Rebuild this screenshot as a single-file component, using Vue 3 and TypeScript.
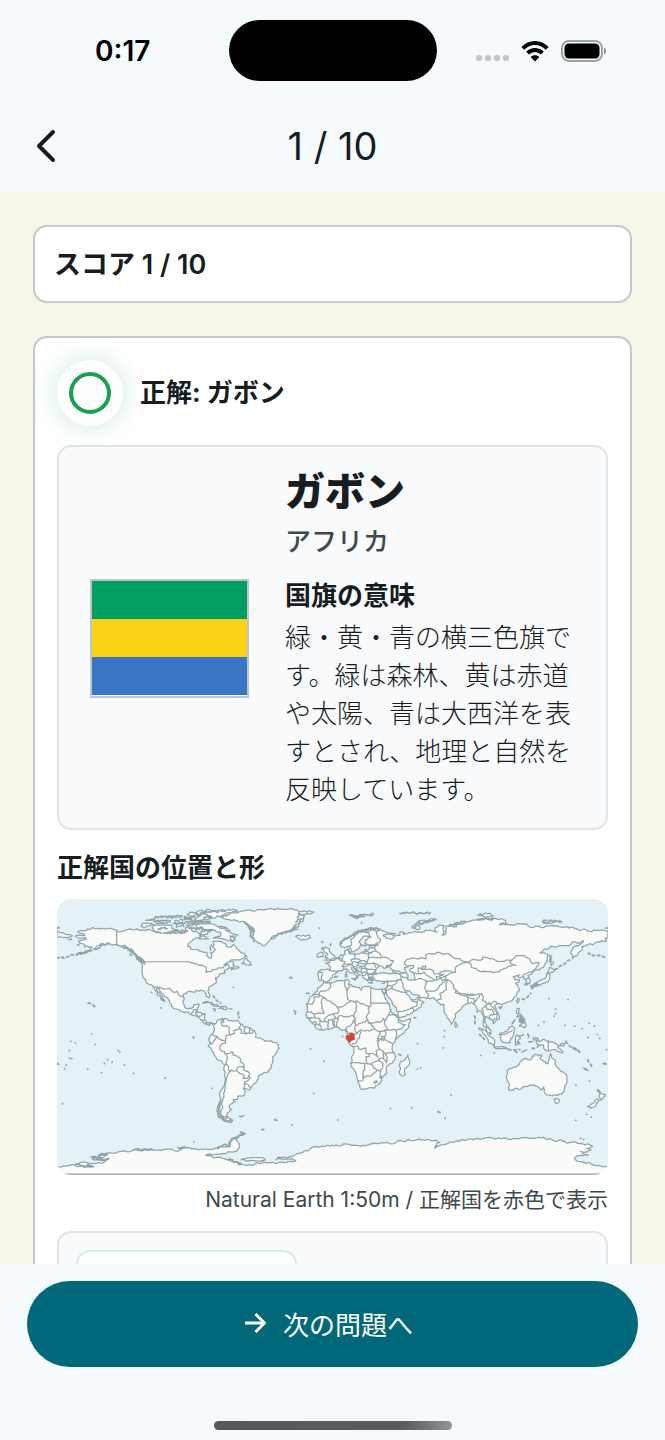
<script setup lang="ts">
import { ref } from 'vue'

interface FlagStripe {
  tone: string
}

const total = 10
const current = ref(1)
const score = ref(1)
const country = 'ガボン'
const region = 'アフリカ'
const meaning =
  '緑・黄・青の横三色旗です。緑は森林、黄は赤道や太陽、青は大西洋を表すとされ、地理と自然を反映しています。'
const stripes: FlagStripe[] = [{ tone: 'green' }, { tone: 'yellow' }, { tone: 'blue' }]

// All map geometry is "longitude,latitude" pairs in degrees.
const land: string[] = [
  // Americas
  '-168,65.6 -166,66.3 -162,66.1 -162,66.8 -164,67.5 -166.5,68.4 -163,69.3 -160,70.6 -156.5,71.3 -152,70.8 -148,70.4 -143,70.1 -141,69.6 -137,69 -134.5,69.6 -130,70 -128,70.5 -125,69.5 -121,69.8 -117,68.9 -115,68.3 -115,67.9 -110,68 -108,67.3 -108,68.2 -104,68 -101,67.8 -98,67.8 -96,68.2 -94.5,69 -96,70 -96,71.5 -94.5,72 -92,70.5 -92,69.5 -90.5,68.5 -89,69 -88,68 -86,67.5 -85.5,69.3 -82,69.6 -81.3,68.5 -82,67 -84,66.3 -87,66.5 -86,66 -87,64.5 -90,64 -91,63.5 -93,62 -94.5,60.5 -94.7,59 -93,58.7 -92.5,57 -90,57 -87,56 -85,55.3 -82.2,55.1 -82.3,53 -81,51.8 -79.3,51.3 -79,52 -79,54 -79.7,54.8 -77.5,55.6 -76.5,57 -78.5,58.8 -77.5,60 -78,62.3 -75,62.3 -72,61.6 -70,61 -69.5,59 -68,58.5 -66,58.7 -64.5,60.3 -63,58.5 -61.5,57 -60,55.2 -57.5,54.5 -56,52.5 -58.5,51.3 -60.5,50.2 -66,50.2 -69,48.5 -71,47 -68,48.8 -65,49.2 -64.5,48 -65.2,47 -64,46.2 -61.5,45.8 -61,45.3 -64,44.4 -66,43.6 -66,44.6 -64.5,45.5 -67,45 -69,44 -70.5,43.4 -70.8,42.3 -70,41.8 -72,41.2 -74,40.6 -74,39.6 -75.5,38.5 -76,37 -76.4,38.8 -76.2,37 -75.8,35.5 -77.5,34.3 -79,33.5 -81,31.8 -81.4,30 -80.2,27 -80.5,25.2 -81.8,26 -82.7,28 -84,30 -86,30.4 -89,30.3 -90,29.2 -92,29.6 -94.5,29.4 -97,28 -97.4,26 -97.8,22.5 -96.5,19.3 -94.5,18.2 -92,18.6 -90.8,19.5 -90.4,21 -87.2,21.5 -87.6,19.5 -88.3,18 -88.5,16 -86,15.9 -83.3,15 -83.6,12.5 -83.6,11 -82,9 -80,9.2 -77.5,8.6 -76.8,8 -75.5,10.5 -74.8,11.1 -72,12.2 -71.5,11 -71.6,9.2 -71,9.8 -71.3,11 -70,12 -68,10.7 -65,10.1 -62,10.7 -61,9.5 -60,8.4 -57.5,6.3 -54,5.9 -51.7,4.2 -50,1.8 -50.5,0 -48.5,-0.7 -44.5,-2.5 -41,-2.9 -38.5,-3.7 -35.3,-5.2 -34.8,-7.5 -36.5,-10.5 -39,-13 -39,-17 -40.5,-20.8 -42,-23 -44.5,-23.2 -48,-25.3 -48.6,-28 -50.5,-30.5 -53.5,-34 -55,-34.9 -58,-34.2 -57,-36 -57.5,-38 -62,-39 -62.3,-41 -65,-41 -63.7,-42.5 -65.3,-43.5 -67.5,-46 -65.8,-47.5 -69,-50.5 -68.4,-52.3 -70.8,-53.8 -74,-52 -75.5,-49 -74.5,-46 -72.8,-42 -73.6,-38 -71.6,-33 -70.4,-25 -70.3,-18.4 -76,-14 -79.7,-7.2 -81.3,-6 -80,-3.2 -81,-2 -80,0.5 -78.8,1.5 -77.2,4 -77.5,6.5 -77.9,7.3 -79.5,8.9 -80.4,8 -80.4,7.3 -82,8.1 -83.5,8.5 -85,10 -86,11.2 -87.5,12.9 -90,13.8 -92.2,14.5 -94,16.1 -96.5,15.7 -99,16.7 -102,18 -105.3,19.8 -105.5,21.5 -106.5,23.5 -109.2,26 -112,28.7 -113,31.2 -114.8,31.8 -114.5,30 -112.8,28 -111,25.5 -109.5,23.2 -110.3,23.2 -112.2,25 -112.2,26.3 -114.8,27.6 -114.2,28.5 -115.8,30.3 -117.1,32.5 -118.5,34 -120.6,34.6 -122,36.7 -123.8,39 -124.3,40.5 -124.4,43 -124,46 -124.7,48.3 -122.5,47.5 -122.8,49 -125,50.3 -127.5,51.5 -128.5,53.5 -130.5,54.8 -132,56.5 -134,58 -137,58.6 -140,59.8 -144,60 -147,61 -149,60 -151.5,59.3 -151,61 -154,59.3 -156,57.6 -159,56 -163,54.8 -161.5,56 -158,57.5 -157,58.8 -159,58.6 -162,58.7 -162,60 -165,61 -166,62.5 -163,63.2 -161,64 -161,64.6 -166,64.5',
  '-68.6,-52.7 -65.2,-54.7 -68.5,-55.5 -72,-54.2 -70,-53.5',
  // Greenland and the Canadian Arctic
  '-73,78.3 -68,79.8 -64,81 -60,82 -50,82.5 -43,83.2 -33,83.6 -25,83 -22,82 -12,81.5 -18,80 -19,78 -19,76 -22,73.5 -22,72 -26,70.5 -22.5,70.2 -27,68.5 -33,68 -37,66 -40,65 -42,62 -43.5,60 -48,61 -51,63.5 -53.5,66.5 -53.5,68.5 -51,69.8 -54.5,71 -55.5,73 -58.5,75.3 -66,76 -71,77',
  '-80,73.7 -76,72.7 -71,71 -68,70 -67,68.5 -62,66.7 -64,65 -67,66 -66,63 -65,62 -69,63 -72,64.3 -78,64.5 -73,66 -73,68 -79,70 -85,70 -89,71 -89.5,73 -85,73.7',
  '-117,70 -113,68.5 -105,69 -101,69.8 -105,71 -105,73 -110,73 -116,73 -118,71.5',
  '-125,72 -123,71.2 -119.5,72.5 -116,73.3 -121,74.5 -124.5,74',
  '-90,76.5 -82,76.3 -78,77.5 -75,79 -68,81 -62,82.5 -68,83.1 -80,83 -88,82 -92,81 -86,80 -88,78.3',
  '-92,76.5 -86,75.7 -80,75.5 -80,74.6 -92,74.8',
  '-95,80 -90,79 -88,80.3 -93,81.3',
  '-117,75.5 -112,74.5 -106,75 -106,76 -112,76 -117,76.3',
  '-122,76 -118,76.8 -116,77.5 -119,76',
  '-95,73.8 -90,73.8 -92,72.7 -95,72.5',
  '-102,73.5 -98,74 -97,72 -102,71.5',
  '-103,76 -98,76.6 -98,75 -103,75.2',
  '-87,64 -81,64 -84,65.8 -86,65.5',
  '-99,69.5 -96,69 -97,68.5',
  '-105,78.5 -98,78.8 -100,78',
  '-59.3,47.7 -55.5,46.8 -53,46.8 -53.5,48.6 -55.8,50 -55.8,51.5 -57.5,50.5',
  '-128,50.7 -125,49.5 -123.5,48.4 -125.5,49',
  // Caribbean
  '-84.8,22 -82,23 -79,22.5 -75,20.7 -74.3,20.1 -77.5,19.9 -78,20.8 -82,22.4',
  '-74.3,18.4 -71,17.8 -68.5,18.3 -70,19.8 -73,19.9',
  '-78.2,18.4 -76.3,18.1 -77.2,17.8',
  '-67.2,18.4 -65.7,18.3 -66.5,18',
  // Eurasia
  '25.8,71 31,70.3 33,69.3 41,67.3 40,66.3 34.5,66.7 33,66.4 35,64.3 37.5,64 40,64.7 40.5,66 44,66.3 44,68.5 47,67.8 46,66.9 50,68 53,68.6 56,68.4 60,68.5 61,69.7 65,69.2 68.5,68.3 67,69.5 67,71.2 69.5,72.9 72.8,72.8 72,71 73,68.5 71.5,66.3 74,67.5 74.5,70.5 74,72.3 78,72.3 81,72 80.5,73.6 87,75 90,75.4 93,76 99,76.3 104.3,77.7 108,76.7 113,75.8 113.5,74 109,73.5 114,73.6 119,73 124,73.8 127,73.5 129,71.5 132,71.8 136,71.5 140,72.4 145,72.3 150,71.5 155,71 159,70.8 161,69.5 166,69.6 170,69 171,70 176,69.7 180,69 180,65 178,64.3 179,62.5 174,61.8 170.3,60 166,60.2 163,59 162.5,56.2 160,53.2 156.7,51 155.6,55 157,58 163.5,61.5 164,62.6 160,61 156.5,61.6 154.5,59.5 149,59.5 142.5,59.2 135.5,54.8 139.5,54.2 141,53 140.5,50 138.5,46.5 135,43.5 132,43.2 130.7,42.3 127.5,39.8 129.3,37 129,35.2 126.5,34.5 126.7,37.5 125,38 125,39.5 121.5,38.9 122,40.5 118,39.2 119,37.3 122.3,37.2 119.5,35 121.5,32 122,30 120,26.5 117,23.6 113.5,22.2 110.5,21.2 109.8,21.4 108,21.6 106,19.5 107,17 109,13.5 109,11.5 106.7,10.4 105,8.7 105,10.3 102.8,11.8 101,12.8 100.5,13.5 99.8,12 99.3,9.4 100.5,7.2 103.3,4.5 103.5,1.5 101.3,2.8 100.4,5.8 98.3,8 98.6,10.5 97.7,15 97,17 94.5,16 94.3,18.5 92,21.5 91,22.7 89,21.8 87,21.5 85,19.6 82.3,16.6 80.2,15 80,12 79,10 77.6,8.1 76,11 74.5,14 73,18 72.8,21 70.8,20.9 69,22.3 68,23.7 66.5,25.3 61.6,25.2 57.3,25.7 56.5,27 52.5,27.5 50.5,30 48,30 48.5,28 50.2,26.5 51.2,24.6 54,24.1 56.3,26 56.8,24.2 59.8,22.5 57.7,19.5 55,17.2 52.2,15.6 45,12.8 43.4,12.7 42.8,16 39.1,21.5 35.2,28 34.9,29.4 34.3,27.8 32.6,30 32.3,31.2 34.3,31.4 36,34.5 36,36.8 32.5,36.1 30.5,36.6 28,36.8 26.5,38.5 26.3,40 29,41 33,42 36.5,41.3 41.5,41.5 39,44 37.5,45 38.5,47 35,46.3 36.5,45.3 33.7,44.5 32.7,45.8 30.8,46.5 28.7,44.8 27.8,42.5 28.8,41.2 26,40.8 24,40.8 22.9,40.3 24,37.9 22.8,36.5 21.3,37.8 19.4,40.3 19.4,41.8 15.2,44.2 13.6,45 13.8,45.6 12.3,45.2 12.5,44 14,42.5 16,41.8 18.4,40.2 17,40.5 16.5,38.5 15.7,38 15.8,40 12,41.8 10.3,43.5 8.8,44.4 6,43.1 3.2,43 3.2,41.9 0,40 -0.2,38.7 -2,36.8 -5.3,36.1 -6.4,36.9 -8.9,37 -9.3,38.7 -8.8,43.2 -1.8,43.4 -1.2,45.5 -4.5,48 -1.6,48.7 -1.8,49.7 1.5,50.2 4,51.8 5,53.3 8.5,53.8 8.2,56.5 10.5,57.6 10.3,56 11,54.2 14,54.2 18.5,54.7 21,55.3 21.2,57 24,57.2 24,59.2 28,59.6 30,60 23,60 21.3,61 21.5,63 25.3,65 22.3,65.8 17.3,62 18.5,60 16.5,57 14.3,55.5 12.8,55.6 11.2,59 8,58.1 5.5,58.8 5,61.8 10,64 13,66.5 16,68.6 20,70',
  '-180,69 -175,67.3 -170,66 -173,64.3 -178,65.5 -180,65',
  // Africa
  '-6,35.8 -2,35.1 5,36.8 10,37.3 11,35.5 10.2,34 15,32.4 19,30.3 20,32.5 23,32.7 29,30.9 32.3,31.2 32.5,29.9 34,26.5 35.5,24 37.2,21 37.5,18.5 39.5,15.5 43.2,12 43.3,11.5 44.5,10.4 51,11.8 50,8 47.5,4 43,-0.5 41,-2 39.3,-4.8 39,-7 40.5,-11 40.7,-15 36,-18.8 35,-21 35.5,-24 32.8,-26 32,-28.8 30,-31.3 27,-33.7 22,-34.1 18.5,-34.3 18,-32 16.5,-28.6 14.5,-22.5 11.8,-17.5 13.8,-11 12.3,-6 9,-1 9.5,1 9.8,3.5 8.5,4.7 6,4.3 4,6.3 1,6 -2,4.8 -4,5.2 -7.5,4.4 -11.5,7 -13.3,9 -15,11 -16.8,12.5 -17.4,14.7 -16.3,16.5 -16.2,19.5 -17,21 -14.8,26 -12,28 -9.8,29.8 -9.7,31.5 -6.8,34',
  '49.3,-12 50.4,-15.5 47.5,-24.8 45,-25.5 43.5,-23 44.3,-20 44,-17 47,-15.5',
  // European islands
  '-5.5,50.1 1.3,51.2 1.7,52.7 0,53.5 -1.5,55 -2,57.6 -5,58.6 -6,57 -5,55 -3,54 -4.5,53.2 -5,51.8 -3,51.4',
  '-10,52 -6.4,52.2 -6,54 -7.5,55.3 -10,54',
  '-22,64 -18.5,63.5 -14.5,64.5 -15,66.2 -20,66 -22,66.3 -24,65.6',
  '8.4,39 9.6,39.2 9.4,41 8.4,40.8',
  '9,41.5 9.4,43',
  '12.5,38 15.5,38.2 15,36.8',
  '23.6,35.4 26.2,35.1',
  '32.4,34.8 34.4,35.6 33.5,34.9',
  // Arctic Eurasia
  '11,79.5 16,77 21,78.5 18,80',
  '20,80 27,80.2 22,79.4',
  '52,71 57,70.6 56,73 60,75 68,76.8 60,76.2 55,74.5 52,72',
  '95,79.5 100,81 105,79 100,78',
  '137,75.5 145,75.8 150,75 140,74',
  // East and South-East Asia
  '142,53.5 143.3,52 143,49 144.5,49 142.8,46.5 142,49',
  '140,41.5 141.7,45.4 145.3,43.5 143,42',
  '141.5,41.4 142,39.5 140.8,35.8 137,34.7 135.7,33.6 131,34.2 133,35.5 136.5,37 139,38 140,40.5',
  '130,33.5 131.9,33 131,31.3 130,32',
  '132.5,33.8 134.5,34.2 133.5,32.9',
  '121,25 121.8,25 120.8,22 120.1,23.2',
  '108.7,19.3 110.8,20 109.6,18.3',
  '79.8,8 80.2,9.7 81.8,7.5 80.5,6',
  '120.3,16 120.7,18.5 122.2,18.4 121.6,15.5 124,13 121,13.6',
  '122,11.8 123.2,11 122.5,10.5 125,12.4 125.3,11 124,10 122.5,9.3',
  '122,7 123.5,8.5 126,9.5 126.4,7 125.3,5.8 124,7',
  '117.3,8.3 119.4,11.2',
  '109,1.5 111,2.5 115,5 117,7 119,5 118,1 116,-3.8 110.3,-2.8',
  '95.3,5.6 97.5,5.2 103,0 106,-3 105.7,-5.8 102,-3.8 98.5,1.8',
  '105.3,-6.6 108.5,-6.6 112.5,-6.7 114.5,-8 108,-7.7',
  '119.5,-5.5 119.5,-0.5 120.5,1.2 125,1.5 121,0.5 123,-0.8 121.5,-2 122.5,-5 121,-3 120.3,-5.5',
  '123.6,-10.3 127,-8.5 125,-9.4',
  '127.5,2 128.5,1 127.8,-0.8',
  '128,-3.2 130.7,-3.2 129,-3.6',
  // Oceania
  '131,-0.8 134,-0.8 135,-3.3 138,-1.7 144.5,-3.8 147.8,-6.2 147,-6.8 150.5,-10.5 147,-9.5 143.5,-8.5 141,-9.1 138.5,-8.2 138,-5.5 133,-4 134,-2.5 131.5,-2',
  '148.5,-5.6 152,-4.3 151,-6',
  '164.1,-20.2 167,-22.2 165,-21.5',
  '177.3,-17.8 178.6,-18',
  '173,-34.5 175.5,-37 178.3,-37.8 177,-39.5 175.2,-41.5 175,-40 174,-39.3 174.8,-37.5',
  '172.7,-40.6 174.2,-41.8 170.7,-45.9 168.5,-46.6 166.6,-45.8 171,-42.5',
  '144.8,-40.8 148.2,-40.9 147.5,-43.3 146,-43.4',
  '114,-22 113.5,-26 115.7,-32 115,-34.3 118,-35 123.5,-34 126,-32.3 129,-31.6 131.5,-31.4 134.5,-33 136,-34.8 137.8,-32.7 138.2,-35.5 140,-38 143.5,-38.8 147,-38.3 150,-37.3 151.5,-33 153.2,-30 153.2,-26 150.8,-23.3 146.3,-19 145.3,-15 143.5,-14 142.5,-10.8 141.6,-14 140.8,-17.5 139.5,-17.5 135.8,-15 136.8,-12.2 132.5,-11.4 130.5,-12.7 129.5,-15 126,-14 122.3,-17.2 121.8,-18.5 117,-20.7',
  // South Atlantic
  '-61,-51.8 -58,-51.5 -59,-52.2',
  '-38,-54 -36,-54.7',
  // Antarctica
  '-180,-84.2 -168,-84 -160,-85 -156,-85 -168,-83.2 -152,-82.5 -148,-81 -156,-80.5 -146,-79.5 -158,-78.3 -147,-77 -153,-77.2 -145,-75.8 -136,-74.6 -128,-74 -115,-74.1 -102,-74.7 -97,-72.5 -90,-73.3 -80,-73.4 -74,-72 -67,-72 -67,-69 -65,-66 -60.5,-64 -57,-63.3 -61,-65 -63,-67 -61,-70 -61.5,-73 -64,-75 -72,-76.5 -83,-77.5 -76,-79 -70,-80 -60,-82.5 -60.6,-83.6 -50,-82.6 -41,-82.2 -24,-81.3 -37,-80.4 -36,-79 -27,-78.5 -21,-76 -15,-73.5 -10.6,-71.6 0,-71 10,-70.4 20,-70.8 30,-69.8 38,-70 42,-68.5 50,-67.2 57,-66.6 68,-67.8 70,-69 67,-72.8 73,-70.5 80,-68.3 89,-66.8 100,-66 112,-66.1 115,-67 122,-66.6 132,-66.2 143,-67 152,-68.5 160,-69.5 165,-70.7 170,-71.6 166,-73 169,-74 162,-75 167,-77.5 160,-77.8 158,-79.5 161,-81.5 170,-83.5 180,-84.2 180,-89.7 -180,-89.7',
  '-60,-80.5 -54,-79 -46,-79 -44,-80.3 -52,-80.8',
]

const borders: string[] = [
  // North and Central America
  '-141,69.6 -141,60.3 -138,59 -135.5,59.7 -133,57.5 -130,56 -130,55',
  '-122.8,49 -95,49 -92,48.3 -89.5,48 -84.8,46.7 -82.5,45.3 -82.5,42 -79,42.8 -79,43.5 -76.5,44 -74.7,45 -71.5,45 -70.2,46.2 -69,47.4 -67.8,47 -67.3,45',
  '-117.1,32.5 -114.8,32.6 -111,31.3 -108.2,31.3 -106.5,31.8 -104.5,29.6 -103,29 -101.5,29.8 -99.3,26.5 -97.3,25.9',
  '-92.2,14.5 -91.5,16 -91,17.8 -89.1,17.8 -88.3,18',
  '-89.1,17.8 -89.2,15.9 -88.5,15.8',
  '-89.2,15.9 -89.3,14.4 -87.7,13.2 -85,14.5 -83.3,15',
  '-85.7,11.1 -83.7,10.9',
  '-82.9,8.2 -82.6,9.5',
  '-71.7,18 -71.7,19.7',
  // South America
  '-71.5,11.8 -72.8,9 -72,7.2 -67.5,6.2 -67.3,2.5 -66.8,1.2 -69.5,0.8 -69.5,-1 -70,-4.2',
  '-78.8,1.4 -77,0.4 -75.3,0 -72.5,-2.3 -70,-2.7 -70,-4.2 -72.9,-5.2 -73.8,-7.3 -72.5,-9.5 -70.6,-9.5 -70.6,-11 -69.5,-11',
  '-80.3,-3.4 -79,-5 -77.8,-3 -75.3,0',
  '-69.5,-11 -68.7,-12.5 -69,-15.5 -69.5,-17.5 -70.3,-18.4',
  '-69.5,-11 -65.4,-9.8 -65,-12 -60.5,-13.8 -60.2,-16.2 -58.3,-17.3 -57.7,-20 -59,-19.3 -62,-20 -62.7,-22.2 -66.2,-21.8 -67.2,-22.8 -68,-21 -69.5,-17.5',
  '-67.2,-22.8 -68.5,-25 -69.8,-30 -70,-33.5 -71.2,-37 -71.8,-42 -71.7,-46 -73,-49 -72.3,-52 -68.5,-52.3',
  '-57.7,-20 -57.9,-22 -55.5,-22.5 -54.3,-24 -54.6,-25.6 -56,-27.3 -58.6,-27.2 -57.6,-25.3 -62.7,-22.2',
  '-54.6,-25.6 -53.8,-27 -57.6,-30.2 -58.3,-34',
  '-57.6,-30.2 -55,-31.2 -53.4,-33.7',
  '-60,8.3 -61.2,6 -60,5 -59.8,2.3 -56.5,1.9 -54.5,2.4 -52.5,2.2 -51.7,4.2',
  '-57.2,6 -58,4 -56.5,1.9',
  '-54,5.8 -54.5,2.4',
  '-66.8,1.2 -64,2 -64.5,4 -60.7,5.2',
  // North and West Africa
  '-2,35.1 -1.2,32.3 -5,30 -8.7,28.7 -8.7,27.3 -4.8,25 1.2,21.1 3.2,19 6,19.5 12,23.5 10,24.5 9.5,26.5 9.5,30.2 8,33 8.3,36.9',
  '-13,27.7 -8.7,27.7 -8.7,26 -12,26 -12,23.4 -13,21.3 -17,21.3',
  '-4.8,25 -6.5,25 -5.5,15.5 -10,15.4 -12,14.8 -14,16.5 -16.4,16.2',
  '9.5,30.2 11.5,33',
  '12,23.5 14.2,22.6 16,23.4 24,19.5 24,20 25,20 25,22 25,31.6',
  '25,22 36.8,22',
  '24,19.5 23.9,15.7 22,13 23,11',
  '15,23 15.5,21 15.5,17 13.5,13.7',
  '3.2,19 4.2,16.5 3.5,15.3 0.2,15 2.3,12 3.6,11.7 4,13.5 8,13 13.5,13.7 14.6,12.5 13.5,10 11.5,7 9,6 8.5,4.7',
  '3.6,11.7 2.7,9 2.7,6.3',
  '0.2,15 -2.5,14 -5.3,11.5 -5,10 -2.7,9.6 -2.8,11 0,11 2.3,12',
  '-2.7,9.6 -3,5.1',
  '0,11 1.2,6.1',
  '0.9,11 1.6,6.3',
  '-12,14.8 -11.4,12.4 -8.5,12 -8,10.2 -5,10',
  '-8,10.2 -8.3,7.6 -7.5,4.4',
  '-13.3,9 -11,10 -10.5,8.5 -8.3,7.6',
  '-10.5,8.5 -11.5,7',
  '-11.4,12.4 -16.7,12.4',
  '-13.7,12.6 -15,11',
  // Central and East Africa
  '14.6,12.5 15,10 14,9.9 15.5,7.5 14.5,5 16,2.2 9.8,2.3',
  '15.5,7.5 19,9 23,11 24,8.7 27.4,5.2',
  '16,2.2 18.5,4.5 22.5,4.2 27.4,5.2 30.8,3.5',
  '18.5,3.5 17.8,-0.5 16,-2.5 15,-4.5 12.8,-4.7',
  '23.5,9 28,9.5 32,10 33,12.2 34.3,10.5 34,8.5 36,4.5 30.8,3.5 31.2,2 29.6,-1.3 34,-1 35,1.8 34,4.2',
  '34.3,10.5 36.5,14.3 38.5,17.5',
  '36.5,14.3 40,14.5 42.5,12.5',
  '43,11 43,9.5 47.8,8 45,5 42,4.2 36,4.5',
  '42,4.2 41,-1.7',
  '34,-1 37.7,-3.5 39.3,-4.7',
  '29.6,-1.3 30.5,-2.5 29.4,-4.5 30.8,-8.3 33,-9.5 34.6,-11.5 40.4,-10.5',
  '29,-2.8 30.5,-2.4',
  // Southern Africa
  '12.3,-6 16.5,-5.9 17,-8 21.8,-7.3 22,-11 24,-11 24,-13 21.9,-13 22,-16.2 23.4,-17.6',
  '24,-11 28.5,-12 29.7,-13.4 28.6,-9.3 30.8,-8.3',
  '11.8,-17.3 18.5,-17.4 23.4,-17.6 25.2,-17.8 29.3,-22 25.5,-25.5 20.7,-26.8 20,-25',
  '21,-18 21,-22 20,-22 20,-28.4 16.5,-28.6',
  '25.2,-17.8 28.9,-15.9 30.4,-15.6 33,-17 32.7,-20 31.3,-22.4 29.3,-22',
  '31.3,-22.4 32,-26.8',
  '30.4,-15.6 30.2,-14.5 33.2,-14',
  '33,-9.5 33.2,-14 35,-17 35.8,-15.5 34.6,-11.5',
  '27,-29.7 28.5,-28.7 29.4,-29.5 28,-30.6 27,-29.7',
  '31,-26 32,-26.3 31.8,-27.3 31,-27 31,-26',
  // Europe
  '-8.8,41.9 -6.5,41.8 -7.3,38.5 -7.3,37.2',
  '-1.8,43.4 3.2,42.4',
  '2.5,51.1 6,49.5 8.2,49 7.6,47.6 6,46.3 7,45.9 7.5,43.8',
  '3.4,51.4 6,51 6,49.5',
  '6,51 7,53.3',
  '7.6,47.6 9.6,47.5 13,47.5 13,48.8 12.2,50.3 14.8,51 14.3,53.9',
  '7,45.9 10.4,46.8 13.7,46.5',
  '13,48.8 17,48.7 18.8,49.5 14.8,51',
  '18.8,49.5 22.5,49.1 23.6,51.5 23.5,54 19.8,54.4',
  '17,48.7 16.2,46.9 18.8,45.9 21,46.2 22.8,48 22.5,49.1',
  '17,48 22.2,48.4',
  '22.8,48 26.6,48.2 28.2,45.5',
  '21,46.2 22.7,44.2 28.5,43.8',
  '13.7,45.5 16.2,46.9',
  '15.7,45 19,45 18.5,42.5',
  '19,45 22.7,44.2 22.4,42.3 19.4,41.8',
  '22.4,42.3 23,41.3 26.3,41.7 28,42',
  '23,41.3 20.2,40',
  '23.5,54 26.5,55.7 28.2,56.2 31,54.7 31.5,53.2 32,52 34,52 38,49.8 40,49.5 38.2,47.2',
  '23.6,51.5 31.5,51.3 32,52',
  '21,56 26.5,55.7',
  '24.4,57.9 27.5,57.6',
  '28.2,56.2 27.5,57.6 28,59.4',
  '26.6,48.2 30,46.5',
  '28,60.5 31.5,62.8 29.5,65 29,69 31,69.7',
  '24.1,65.8 23.6,67.8 20.5,69.1 26,69.9 29,69',
  '11.2,59 12.5,61 12,63.5 14.5,66 18,68.5 20.5,69.1',
  // Central Asia and Mongolia
  '49,46.3 47,48 48,50 52,51.5 55,51 61,50.8 61,53.5 68,55 71.5,54.2 77,53.3 80,51 83,51 87.3,49.1',
  '53,42 56,41.3 56,45 61.5,44 66,43 66,41.5 69,41.3 71,42.5 76,43 80.3,42.2 80.3,45 83,47.2 85.5,48 87.3,49.1',
  '87.3,49.1 92,50.7 98,50.5 98,52 102,51.3 107,49.7 114,50.2 116.5,49.9 116,48 119.8,46.8 112,44.5 105,41.7 96,42.7 91,45.1 90.5,47.5 87.3,49.1',
  '116.5,49.9 120,53 125.5,53 131,47.8 135,48.4 133,45 131,43',
  '130.7,42.3 128,42 124.4,40',
  '126.7,37.8 128.4,38.6',
  '56,41.3 60,42.2 62,39.8 66.5,37.4',
  '68,37 68,39.5 73.8,39.4',
  '69,41.3 73,40.8 70,40',
  // South and South-East Asia
  '80.3,42.2 74,40 73.8,38.5 75,37 78,35.3 79,32.5 81,30.3 86,28 89,27.5 92,27.7 97,28.2 98.7,25.5 97.6,24 101.2,21.3 105.3,23.2 108,21.6',
  '75,37 74,34.5 74.5,31 70,28 71,24.5 68.2,23.7',
  '81,30.3 80.1,28.8 88.1,26.5 88,27.9',
  '89,27 92,27',
  '88.9,21.9 88.1,25.8 92.2,25 92.3,22 94,24 97,28.2',
  '101.2,21.3 100,20.3 97.7,18.3 98.5,15 99.5,11.5 98.7,10.2',
  '100,20.3 101,17.7 104.5,17.5 105.5,14.4 102.5,13.7 102.8,11.8',
  '102.2,22.4 104,20 107.5,15 107.5,12.3 104.5,10.4',
  '105.5,14.4 107.5,14.6',
  '100.2,6.5 102,6.2',
  '109.7,1.8 112,1.3 115,3 117.5,4.2',
  '141,-2.6 141,-9.1',
  // Middle East and Caucasus
  '61.6,25.2 63,27.2 60.9,29.8 61,34.5 61.2,36.6 57,38.2 53.9,37.3',
  '60.9,29.8 66.3,29.8 69.3,31.9 71.3,34.5 74.8,37.2 71.5,36.7 71,38.4 68,37 64.5,36.3 61.2,36.6',
  '48,30 46,33 45.4,36 44.8,37.2 44.8,39.7 48,38.8 48.9,38.4',
  '36,36 42.4,37.1 44.8,37.2',
  '42.4,37.1 41,34.4 38.8,33.4 35.8,32.8',
  '35,29.4 37.5,31 39,32 44.7,29.2 47.5,29 48.4,28.5',
  '38.8,33.4 39,32',
  '42.8,16.4 47,17 52,19 55,20 55.5,22.5 51.6,24',
  '52,19 53.1,16.6',
  '56,24.5 55.5,22.5',
  '41.5,41.5 43.5,41.1 46.5,41.8 48.5,41.8',
  '40,43.4 44,42.6 46.5,41.8',
  '43.5,41.1 44.8,39.7',
  '34.2,31.3 34.9,29.4',
  '35.6,33.2 35,29.5',
]

// Broken coasts, drawn as an extra ragged line.
const fjords: string[] = [
  '-123,48.5 -125.5,50.5 -128,52 -130,54.5 -132.5,56 -134.5,58 -137,58.8',
  '-124,49.5 -127,51.5 -129,53.5 -131,55.5 -133.5,57.5',
  '-131.5,53 -132.5,54',
  '-146,60.5 -149,60 -153,58 -155,57',
  '-158,56.2 -163,54.8 -167,53.5',
  '-112,25 -109.8,23.4',
  '-73.5,-42 -74.8,-46 -75,-49 -74.5,-51.5 -72,-54 -68.5,-55.3 -65.5,-54.8',
  '-73.6,-44 -74.2,-47 -74.2,-50 -72.5,-52.5 -70,-54.5',
  '-51.5,62 -51.5,64 -53.3,67 -52,70 -55,72.5 -58,75',
  '-52,66 -51,69 -53,71.5 -56,74',
  '-23,73.5 -25,72.2 -26,71 -24.5,70.3 -30,68.3 -36,66.3 -40,64.5',
  '-22,74.5 -20,77 -19,80 -22,81.5',
  '-24,75 -22,77.5 -21.5,80',
  '5.2,60 6,62.3 10.5,64.5 13,66.5 16,68.5 21,70 26,70.8 30,70.4',
  '10.8,56 12,55.2',
  '19,60.2 22,60.1',
  '23.5,38.5 25,37.2 26.8,37 25.8,39 24,36.8',
  '14.5,44.5 16.5,43.2',
  '124,10.8 123,12 125,11.5 125.2,10 123.2,9.8 122,11 124.5,12.2 124,9.5',
  '120.5,13 123,12.8 122,11.5',
  '126,34.4 128.5,34.8',
  '129.5,33.3 131,32.6 134,34.2',
  '-97,76.8 -92,77.5 -97,78 -90,77.9',
  '-104,74 -96,75 -91,74.2 -84,74.8',
  '-115,74.2 -108,74.2',
  '-116,77.6 -110,78.3 -104,77.8',
  '-88,79 -83,80 -79,78.5 -84,77.2',
  '-86,81 -78,81.8 -70,82',
  '-94,71 -88,70.5 -82,69.8 -78,70',
  '-108,68 -103,68.3 -98,68.2',
  '-114,70.3 -108,70.5',
  '-74,71.8 -70,70.3 -67,69',
  '-65,66 -64,64 -66,62.5',
  '-79,60 -79.5,56.5',
  '-66,-68 -68,-71 -75,-72',
  '-57.5,-63.5 -62,-65 -65.5,-67.5',
  '-101,-72.4 -96,-72.3',
  '-130,-73.8 -118,-73.9',
  '-165,-84.6 -157,-84.7',
  '-152,-77 -147,-76.5 -157,-79.8',
  '-68,-80.5 -62,-82 -60,-83',
  '44,80.5 50,80.7 58,80.8 64,81',
  '13,79.2 17,78 20,79.5',
  '53,71.5 55,73 60,75.3 67,76.6',
  '76,72.5 80,73 87,75',
  '95,76.2 101,77.2 105,77.6',
  '160,-9 157,-7.3',
]

const islands: string[] = [
  '-163,54.6 -168,53.2 -173,52.2 -178,51.7',
  '-178.5,71.2 -180,71.3',
  '-180,51.5 -176,51.9',
  '-172,63.5 -169,63.3',
  '-166.5,60 -165.8,60',
  '-159.6,22 -157.9,21.4 -156.5,20.8 -155,19.4 -155.8,20',
  '-78,26.7 -77,25.5 -75.5,23.5 -73,22',
  '-61.5,16 -61,14 -61.2,12.5',
  '-91,0 -90.5,-0.8',
  '-17,28.3 -14,28.3',
  '-25,17 -23.5,15 -24.5,15',
  '-28,38.6 -25.5,37.8',
  '-7,62.1 -6.5,61.6',
  '-1.2,60.5 -1.5,59.9',
  '-7,57.3 -6.5,58.2',
  '1.5,39 4,40',
  '145.5,44 148,45.2 151,46.8 155,50',
  '124,24.5 127.5,26 129.5,28.4',
  '92.8,13.5 92.9,11 93.8,7',
  '96,1.5 98,0.5 99,-1.5 100.5,-3',
  '115,-8.3 116.5,-8.6 119,-8.6 122.5,-8.5',
  '119.5,-9.6 120.5,-10.2',
  '130.5,-7.5 134.5,-6',
  '152.5,-3 153.8,-4.5',
  '154.7,-5.8 156.5,-7.2 159,-8.5 161.5,-10.3',
  '166.8,-15 167.5,-16.5 168.5,-18 169.3,-19.5',
  '177,-17.5 180,-16.5',
  '-180,-17 -178.8,-18',
  '68.8,-49 70.3,-49.5',
  '138,76 145,76 149,75.3',
  '178.5,71 180,71',
  '167,54.6 172,53 178,51.8',
  '-46,-60.6 -45,-60.7',
  '-60,-62.5 -57,-61.9',
  '53.4,12.5 54.3,12.5',
  '43.3,-11.5 45,-12.8',
]

const dots: [number, number][] = [
  [-149, -17.5], [-147, -15], [-144, -16.5], [-140, -9], [-139, -10], [-136, -18.5], [-151, -23.4],
  [-130, -24], [-109.4, -27.1], [-78.9, -33.7], [-171.8, -14], [-170.5, -14.3], [-175, -21], [-174, -18.6],
  [-176.4, -43.8], [-160, -21.2], [-172, -9], [-168, -4], [-157.4, 1.9], [-155, -5], [-171, -3],
  [-64.8, 32.3], [-14.4, -8], [-5.7, -16], [-12.3, -37.2], [-26.5, -57.5], [3.4, -54.4], [6.6, 0.3],
  [8.7, 3.4], [37.8, -46.9], [51.7, -46.4], [57.6, -20.3], [55.5, -21.1], [55.5, -4.6], [73.2, 4],
  [73, 0], [72.4, -7.3], [105.6, -10.5], [96.8, -12.2], [77.5, -38], [73.5, -53.1], [144.8, 13.5],
  [145.7, 15.2], [145.8, 18], [134.5, 7.4], [138.1, 9.5], [151.8, 7.4], [158.2, 6.9], [163, 5.3],
  [167.7, 8.7], [171, 7], [173, 1.4], [174.5, -1], [166.9, -0.5], [179, -8.5], [167.9, -29], [159, -31.5],
  [158.9, -54.6], [166, -50.7], [169, -52.5], [141.3, 25], [153.9, 24.3], [-8.7, 71], [19, 74.5],
  [-112, 18.8], [-118.3, 29], [-77, 17], [164, -67], [162, -66.5], [-90.5, -68.8], [126, 34],
]

const gabon =
  '9.5,1.1 11.3,1 11.3,2.4 13.3,2.3 14.3,1.3 14,-0.2 14.5,-1.8 12.6,-2.3 11.8,-3 11.1,-4 9,-1.2 8.8,-0.4'

const lakes: string[] = [
  '47,45 50,46.6 53,46.7 53,45 51,44.5 50.5,43 53,41.5 53.7,39 53.9,37 51,36.8 49,37.6 49.3,40.3 47.5,43',
  '32,0.3 34,0 33.5,-2.5 31.8,-2',
  '58.5,45.8 61,46.4 60,44 58.5,44',
]

type Point = [number, number]

function noise(a: Point, b: Point): number {
  const v = Math.sin((a[0] + b[0]) * 12.9898 + (a[1] + b[1]) * 78.233) * 43758.5453
  return (v - Math.floor(v)) * 2 - 1
}

// Midpoint displacement, capped in degrees; segments along a meridian or parallel stay straight.
function split(a: Point, b: Point, amount: number, out: Point[]): void {
  const dx = b[0] - a[0]
  const dy = b[1] - a[1]
  const length = Math.hypot(dx, dy)
  if (length < 1.2 || dx === 0 || dy === 0) {
    out.push(b)
    return
  }
  const k = noise(a, b) * Math.min(amount, 0.9 / length)
  const mid: Point = [(a[0] + b[0]) / 2 - dy * k, (a[1] + b[1]) / 2 + dx * k]
  split(a, mid, amount, out)
  split(mid, b, amount, out)
}

function rough(source: string, amount: number, closed = false): string {
  const pts = source.split(' ').map((p) => p.split(',').map(Number) as Point)
  const out: Point[] = [pts[0]]
  for (let i = 1; i < pts.length; i++) split(pts[i - 1], pts[i], amount, out)
  if (closed) split(pts[pts.length - 1], pts[0], amount, out)
  return out.map(([x, y]) => `${x.toFixed(2)},${y.toFixed(2)}`).join(' ')
}

const landShapes = land.map((p) => rough(p, 0.2, true))
const lakeShapes = lakes.map((p) => rough(p, 0.15, true))
const borderLines = borders.map((p) => rough(p, 0.16))
const fjordLines = fjords.map((p) => rough(p, 0.6))
const islandLines = islands.map((p) => rough(p, 0.2))
const dotPath = dots.map(([lon, lat]) => `M${lon} ${lat}h.1`).join('')

function next(): void {
  current.value = current.value < total ? current.value + 1 : 1
}

function back(): void {
  current.value = Math.max(1, current.value - 1)
}
</script>

<template>
  <div class="screen">
    <header class="top">
      <div class="status">
        <time class="clock">0:17</time>
        <span class="island"></span>
        <div class="signals">
          <span class="cell"><i></i><i></i><i></i><i></i></span>
          <svg class="wifi" viewBox="0 0 28 22" aria-hidden="true">
            <path d="M1.800 8.400C8.600 1.200 19.400 1.200 26.200 8.400" />
            <path d="M6.600 13.100C10.900 8.900 17.100 8.900 21.400 13.100" />
            <path class="solid" d="M14 21.600L9.600 17.100C12.200 14.700 15.800 14.700 18.400 17.100Z" />
          </svg>
          <svg class="battery" viewBox="0 0 46 22" aria-hidden="true">
            <rect class="shell" x="1" y="1" width="40" height="20" rx="7" />
            <rect class="charge" x="3.500" y="3.500" width="35" height="15" rx="4.500" />
            <path class="cap" d="M43 7.500C45.800 8.500 45.800 13.500 43 14.500Z" />
          </svg>
        </div>
      </div>
      <div class="bar">
        <button class="back" type="button" aria-label="戻る" @click="back">
          <svg viewBox="0 0 20 34" aria-hidden="true"><path d="M17 3L3 17L17 31" /></svg>
        </button>
        <h1 class="progress">{{ current }} / {{ total }}</h1>
      </div>
    </header>

    <main class="content">
      <section class="card score">スコア {{ score }} / {{ total }}</section>

      <section class="card result">
        <div class="verdict">
          <span class="badge"><span class="ring"></span></span>
          <h2 class="label">正解: {{ country }}</h2>
        </div>

        <article class="panel info">
          <div class="flag">
            <span v-for="s in stripes" :key="s.tone" class="stripe" :class="s.tone"></span>
          </div>
          <div class="facts">
            <h3 class="name">{{ country }}</h3>
            <p class="region">{{ region }}</p>
            <h4 class="label">国旗の意味</h4>
            <p class="meaning">{{ meaning }}</p>
          </div>
        </article>

        <h3 class="label map-title">正解国の位置と形</h3>
        <figure class="figure">
          <svg class="map" viewBox="-180 -90 360 180" role="img" aria-label="世界地図">
            <g transform="scale(1 -1)">
              <polygon v-for="(p, i) in landShapes" :key="'l' + i" class="land" :points="p" />
              <polygon v-for="(p, i) in lakeShapes" :key="'w' + i" class="lake" :points="p" />
              <polyline v-for="(p, i) in borderLines" :key="'b' + i" class="line" :points="p" />
              <polyline v-for="(p, i) in fjordLines" :key="'f' + i" class="line fjord" :points="p" />
              <polyline v-for="(p, i) in islandLines" :key="'i' + i" class="line chain" :points="p" />
              <path class="line dots" :d="dotPath" />
              <polygon class="answer" :points="gabon" />
            </g>
          </svg>
          <figcaption class="caption">Natural Earth 1:50m / 正解国を赤色で表示</figcaption>
        </figure>

        <div class="panel more"><div class="chip"></div></div>
      </section>
    </main>

    <footer class="bottom">
      <button class="next" type="button" @click="next">
        <svg viewBox="0 0 22 22" aria-hidden="true"><path d="M1 11H20M11.500 2L20.500 11L11.500 20" /></svg>
        <span>次の問題へ</span>
      </button>
      <span class="home"></span>
    </footer>
  </div>
</template>

<style>
body {
  margin: 0;
}
</style>

<style scoped>
* {
  box-sizing: border-box;
}

h1,
h2,
h3,
h4,
p,
figure {
  margin: 0;
}

.screen {
  display: flex;
  flex-direction: column;
  height: 100vh;
  background: #f7f4e8;
  color: #171c1e;
  font-family: Inter, 'Noto Sans CJK JP', sans-serif;
}

.top {
  flex: none;
  background: #f5fafd;
}

.status {
  display: grid;
  grid-template-columns: 1fr 208px 1fr;
  align-items: center;
  padding-top: 20px;
}

.clock {
  padding-left: 17px;
  text-align: center;
  font-size: 28px;
  font-weight: 600;
  color: #000;
}

.island {
  height: 61px;
  border-radius: 31px;
  background: #000;
}

.signals {
  display: flex;
  align-items: center;
  justify-content: flex-end;
  gap: 12px;
  padding-right: 58px;
}

.cell {
  display: flex;
  gap: 3px;
  padding-top: 14px;
}

.cell i {
  width: 6px;
  height: 6px;
  border-radius: 2px;
  background: #c3c7ca;
}

.wifi {
  width: 28px;
  height: 22px;
}

.wifi path {
  fill: none;
  stroke: #000;
  stroke-width: 4;
}

.wifi .solid {
  fill: #000;
  stroke: none;
}

.battery {
  width: 46px;
  height: 22px;
}

.shell {
  fill: none;
  stroke: #a0a3a5;
  stroke-width: 2;
}

.charge {
  fill: #000;
}

.cap {
  fill: #8f9294;
}

.bar {
  display: grid;
  grid-template-columns: 60px 1fr 60px;
  align-items: center;
  height: 111px;
  padding-top: 18px;
}

.back {
  display: flex;
  padding: 0 0 0 36px;
  border: 0;
  background: none;
}

.back svg {
  width: 20px;
  height: 34px;
}

.back path {
  fill: none;
  stroke: #171c1e;
  stroke-width: 4;
  stroke-linecap: round;
  stroke-linejoin: round;
}

.progress {
  text-align: center;
  font-size: 38px;
  font-weight: 400;
  line-height: 48px;
}

.content {
  flex: 1;
  min-height: 0;
  overflow-y: auto;
  scrollbar-width: none;
  padding: 33px 33px 0;
}

.card {
  border: 2px solid #c3c8cc;
  border-radius: 14px;
  background: #fff;
}

.score {
  padding: 19px 19px 17px;
  margin-bottom: 33px;
  font-size: 27px;
  font-weight: 600;
  line-height: 38px;
}

.result {
  padding: 22px;
}

.verdict {
  display: flex;
  align-items: center;
  gap: 17px;
  margin-bottom: 19px;
}

.badge {
  display: grid;
  place-items: center;
  width: 66px;
  height: 66px;
  border-radius: 50%;
  background: #fdfefd;
  box-shadow: 0 0 24px 2px rgba(22, 163, 86, 0.2);
}

.ring {
  width: 42px;
  height: 42px;
  border: 4px solid #1b9f54;
  border-radius: 50%;
}

.label {
  font-size: 26px;
  font-weight: 700;
  line-height: 36px;
}

.panel {
  border: 2px solid #e1e5e8;
  border-radius: 14px;
  background: #f9fafc;
}

.info {
  display: flex;
  align-items: center;
  gap: 36px;
  padding: 20px 24px 19px 31px;
}

.flag {
  flex: none;
  display: flex;
  flex-direction: column;
  width: 159px;
  height: 119px;
  border: 2px solid #b9c8cc;
}

.stripe {
  flex: 1;
}

.green {
  background: #009e60;
}

.yellow {
  background: #fcd116;
}

.blue {
  background: #3a75c4;
}

.facts {
  flex: 1;
}

.name {
  font-size: 40px;
  font-weight: 800;
  line-height: 50px;
}

.region {
  margin: 7px 0 18px;
  font-size: 26px;
  font-weight: 500;
  line-height: 36px;
  color: #3f484b;
}

.meaning {
  margin-top: 5px;
  font-size: 26px;
  font-weight: 300;
  line-height: 38px;
}

.map-title {
  margin: 20px 0 13px;
}

.map {
  display: block;
  width: 100%;
  border-radius: 14px;
  background: #e4f2f7;
}

.land,
.lake,
.line {
  stroke: #8fa3aa;
  stroke-width: 0.8;
  stroke-linejoin: round;
  stroke-linecap: round;
}

.land {
  fill: #fafaf9;
}

.lake {
  fill: #e4f2f7;
}

.line {
  fill: none;
}

.fjord {
  stroke-width: 1;
}

.chain {
  stroke-width: 1.2;
  stroke-dasharray: 1.5 2;
}

.dots {
  stroke-width: 1.2;
}

.answer {
  fill: #e53935;
  stroke: #d84a48;
  stroke-width: 0.5;
}

.caption {
  margin-top: 10px;
  text-align: right;
  font-size: 21px;
  line-height: 30px;
  color: #3f484b;
}

.more {
  margin-top: 16px;
  padding: 17px;
}

.chip {
  width: 43%;
  height: 80px;
  border: 2px solid #d9e8ea;
  border-radius: 14px;
  background: #fff;
}

.bottom {
  flex: none;
  display: flex;
  flex-direction: column;
  align-items: center;
  gap: 54px;
  padding: 17px 27px 10px;
  background: #f5fafd;
}

.next {
  display: flex;
  align-items: center;
  justify-content: center;
  gap: 17px;
  width: 100%;
  height: 86px;
  padding: 0 8px 2px 0;
  border: 0;
  border-radius: 43px;
  background: #006879;
  color: #fff;
  font-family: inherit;
  font-size: 26px;
  font-weight: 400;
}

.next svg {
  width: 22px;
  height: 22px;
}

.next path {
  fill: none;
  stroke: #fff;
  stroke-width: 3;
}

.home {
  width: 238px;
  height: 9px;
  border-radius: 5px;
  background: linear-gradient(90deg, #55585a, #5a5c5e 80%, #929597);
}
</style>
